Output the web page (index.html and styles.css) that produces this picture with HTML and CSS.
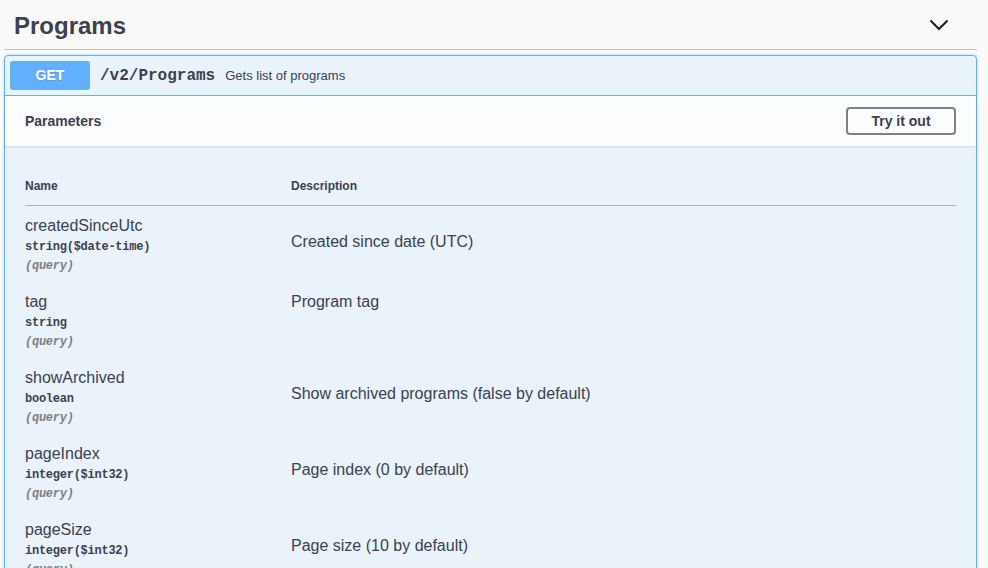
FILE: index.html
```html
<!DOCTYPE html>
<html lang="en">
<head>
<meta charset="utf-8">
<title>Programs</title>
<link rel="stylesheet" href="styles.css">
</head>
<body>
<div class="tag-section">
  <h3 class="tag-header">
    <span class="tag-title">Programs</span>
    <svg class="chevron" width="20" height="20" viewBox="0 0 20 20" aria-hidden="true">
      <polyline points="1.5,5.5 10,14 18.5,5.5" fill="none" stroke="#1b1b1b" stroke-width="2"/>
    </svg>
  </h3>
  <div class="opblock">
    <div class="summary">
      <span class="method">GET</span>
      <span class="path">/v2/Programs</span>
      <span class="summary-desc">Gets list of programs</span>
    </div>
    <div class="section-header">
      <h4 class="section-title">Parameters</h4>
      <button class="try-out">Try it out</button>
    </div>
    <div class="table-container">
      <table class="params">
        <thead>
          <tr><th class="col-name">Name</th><th class="col-desc">Description</th></tr>
        </thead>
        <tbody>
          <tr>
            <td class="col-name">
              <div class="param-name">createdSinceUtc</div>
              <div class="param-type">string($date-time)</div>
              <div class="param-in">(query)</div>
            </td>
            <td class="col-desc"><p class="desc shifted">Created since date (UTC)</p></td>
          </tr>
          <tr>
            <td class="col-name">
              <div class="param-name">tag</div>
              <div class="param-type">string</div>
              <div class="param-in">(query)</div>
            </td>
            <td class="col-desc"><p class="desc">Program tag</p></td>
          </tr>
          <tr>
            <td class="col-name">
              <div class="param-name">showArchived</div>
              <div class="param-type">boolean</div>
              <div class="param-in">(query)</div>
            </td>
            <td class="col-desc"><p class="desc shifted">Show archived programs (false by default)</p></td>
          </tr>
          <tr>
            <td class="col-name">
              <div class="param-name">pageIndex</div>
              <div class="param-type">integer($int32)</div>
              <div class="param-in">(query)</div>
            </td>
            <td class="col-desc"><p class="desc shifted">Page index (0 by default)</p></td>
          </tr>
          <tr>
            <td class="col-name">
              <div class="param-name">pageSize</div>
              <div class="param-type">integer($int32)</div>
              <div class="param-in">(query)</div>
            </td>
            <td class="col-desc"><p class="desc shifted">Page size (10 by default)</p></td>
          </tr>
        </tbody>
      </table>
    </div>
  </div>
</div>
</body>
</html>
```
FILE: styles.css
```css
html, body {
  margin: 0;
  padding: 0;
  background: #fafafa;
  font-family: "Liberation Sans", Arial, sans-serif;
  color: #3b4151;
}

.tag-section {
  margin: 0 11px 0 4px;
}

.tag-header {
  display: flex;
  align-items: center;
  justify-content: space-between;
  box-sizing: border-box;
  height: 50px;
  margin: 0;
  padding: 3px 0 0 10px;
  border-bottom: 1px solid rgba(59, 65, 81, 0.3);
}

.tag-title {
  font-size: 24px;
  font-weight: 700;
  color: #3b4151;
}

.chevron {
  display: block;
  margin-right: 28px;
  margin-top: -3px;
}

.opblock {
  margin-top: 5px;
  border: 1px solid #61affe;
  border-radius: 4px;
  background: rgba(97, 175, 254, 0.1);
  box-shadow: 0 0 3px rgba(0, 0, 0, 0.19);
}

.summary {
  display: flex;
  align-items: center;
  padding: 5px;
  border-bottom: 1px solid #61affe;
}

.method {
  box-sizing: border-box;
  width: 80px;
  height: 29px;
  line-height: 29px;
  text-align: center;
  background: #61affe;
  border-radius: 3px;
  color: #fff;
  font-size: 14px;
  font-weight: 700;
  text-shadow: 0 1px 0 rgba(0, 0, 0, 0.1);
}

.path {
  padding: 0 10px;
  font-family: "Liberation Mono", "Courier New", monospace;
  font-size: 16px;
  font-weight: 700;
  color: #3b4151;
}

.summary-desc {
  font-size: 13px;
  color: #3b4151;
}

.section-header {
  display: flex;
  align-items: center;
  justify-content: space-between;
  box-sizing: border-box;
  min-height: 50px;
  padding: 8px 20px;
  background: rgba(255, 255, 255, 0.8);
  box-shadow: 0 1px 2px rgba(0, 0, 0, 0.1);
}

.section-title {
  margin: 0;
  font-size: 14px;
  font-weight: 700;
  color: #3b4151;
}

.try-out {
  box-sizing: border-box;
  width: 110px;
  height: 28px;
  padding: 0;
  background: transparent;
  border: 2px solid #808080;
  border-radius: 4px;
  font-family: "Liberation Sans", Arial, sans-serif;
  font-size: 14px;
  font-weight: 700;
  color: #3b4151;
}

.table-container {
  padding: 21px 20px 20px;
}

.params {
  width: 100%;
  border-collapse: collapse;
  table-layout: fixed;
}

.params th {
  padding: 12px 0;
  font-size: 12px;
  font-weight: 700;
  line-height: 14px;
  text-align: left;
  color: #3b4151;
  border-bottom: 1px solid rgba(59, 65, 81, 0.2);
}

.params th.col-name {
  width: 266px;
}

.params td {
  vertical-align: top;
  padding: 11px 0 0 0;
}

.params td.col-name {
  padding: 11px 0 9px;
}

.param-name {
  font-size: 16px;
  line-height: 18px;
  color: #3b4151;
}

.param-type {
  padding: 5px 0;
  font-family: "Liberation Mono", "Courier New", monospace;
  font-size: 12px;
  line-height: 14px;
  letter-spacing: -0.25px;
  font-weight: 700;
  color: #3b4151;
}

.param-in {
  font-family: "Liberation Mono", "Courier New", monospace;
  font-size: 12px;
  line-height: 14px;
  letter-spacing: -0.25px;
  font-style: italic;
  font-weight: 700;
  color: #808080;
}

.desc {
  margin: 0;
  font-size: 16px;
  line-height: 18px;
  color: #3b4151;
}

.desc.shifted {
  margin-top: 16px;
}
```
